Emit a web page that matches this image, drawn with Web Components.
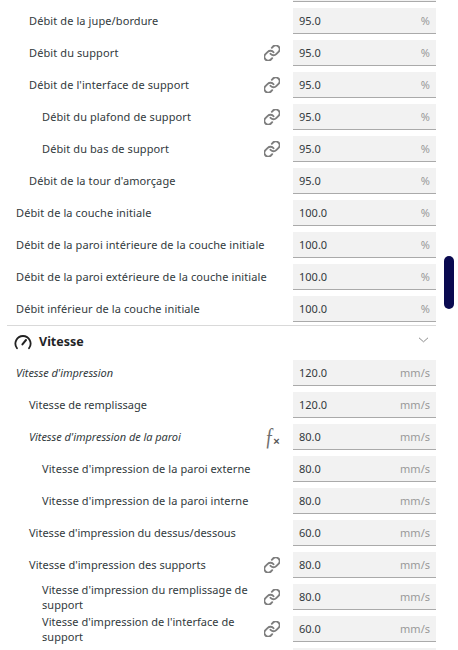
<!DOCTYPE html>
<html lang="fr">
<head>
<meta charset="utf-8">
<title>Paramètres</title>
<style>
  html, body { margin: 0; height: 100%; overflow: hidden; background: #fff; }
  body { font: 11px/15px "Noto Sans", "Open Sans", sans-serif; color: #323a3d; }
</style>
</head>
<body>
<settings-panel>
  <param-row value="" unit=""></param-row>
  <param-row level="1" value="95.0" unit="%">Débit de la jupe/bordure</param-row>
  <param-row level="1" value="95.0" unit="%" icon="link">Débit du support</param-row>
  <param-row level="1" value="95.0" unit="%" icon="link">Débit de l'interface de support</param-row>
  <param-row level="2" value="95.0" unit="%" icon="link">Débit du plafond de support</param-row>
  <param-row level="2" value="95.0" unit="%" icon="link">Débit du bas de support</param-row>
  <param-row level="1" value="95.0" unit="%">Débit de la tour d'amorçage</param-row>
  <param-row value="100.0" unit="%">Débit de la couche initiale</param-row>
  <param-row value="100.0" unit="%">Débit de la paroi intérieure de la couche initiale</param-row>
  <param-row value="100.0" unit="%">Débit de la paroi extérieure de la couche initiale</param-row>
  <param-row value="100.0" unit="%">Débit inférieur de la couche initiale</param-row>
  <section-header>Vitesse</section-header>
  <param-row italic track="-0.05" value="120.0" unit="mm/s">Vitesse d'impression</param-row>
  <param-row level="1" track="0" value="120.0" unit="mm/s">Vitesse de remplissage</param-row>
  <param-row level="1" italic track="-0.05" value="80.0" unit="mm/s" icon="fx">Vitesse d'impression de la paroi</param-row>
  <param-row level="2" track="0.08" value="80.0" unit="mm/s">Vitesse d'impression de la paroi externe</param-row>
  <param-row level="2" track="0.08" value="80.0" unit="mm/s">Vitesse d'impression de la paroi interne</param-row>
  <param-row level="1" track="0" value="60.0" unit="mm/s">Vitesse d'impression du dessus/dessous</param-row>
  <param-row level="1" track="0.03" value="80.0" unit="mm/s" icon="link">Vitesse d'impression des supports</param-row>
  <param-row level="2" track="0.05" value="80.0" unit="mm/s" icon="link">Vitesse d'impression du remplissage de support</param-row>
  <param-row level="2" track="0.03" value="60.0" unit="mm/s" icon="link">Vitesse d'impression de l'interface de support</param-row>
  <param-row value="" unit=""></param-row>
</settings-panel>
<script>
const linkIcon = /*html*/ `
  <svg width="16" height="16" viewBox="1.5 1.5 21 21" fill="none" stroke="#7d7d7d" stroke-width="2.5" stroke-linecap="round" stroke-linejoin="round">
    <path d="M10 13a5 5 0 0 0 7.54.54l3-3a5 5 0 0 0-7.07-7.07l-1.72 1.71"/>
    <path d="M14 11a5 5 0 0 0-7.54-.54l-3 3a5 5 0 0 0 7.07 7.07l1.71-1.71"/>
  </svg>`;

const fxIcon = /*html*/ `<span class="fx"><i>ƒ</i><b>×</b></span>`;

customElements.define(
  "settings-panel",
  class extends HTMLElement {
    constructor() {
      super();
      const shadow = this.attachShadow({ mode: "open" });
      shadow.innerHTML = /*html*/ `
        <style>
          :host {
            display: block;
            position: relative;
            width: 458px;
            height: 650px;
            overflow: hidden;
          }
          .list {
            display: flex;
            flex-direction: column;
            margin-top: -27px;
            padding-right: 22px;
          }
          .thumb {
            position: absolute;
            left: 444px;
            top: 256px;
            width: 10px;
            height: 53px;
            border-radius: 5px;
            background: #0a0a50;
          }
        </style>
        <div class="list"><slot></slot></div>
        <div class="thumb"></div>
      `;
    }
  }
);

customElements.define(
  "param-row",
  class extends HTMLElement {
    constructor() {
      super();
      const level = Number(this.getAttribute("level") || 0);
      const icon = this.getAttribute("icon");
      const track = this.getAttribute("track") || "0.1";
      const shadow = this.attachShadow({ mode: "open" });
      shadow.innerHTML = /*html*/ `
        <style>
          :host {
            display: grid;
            grid-template-columns: 1fr 143px;
            align-items: center;
            height: 32px;
            flex: none;
            color: #323a3d;
          }
          .label {
            grid-area: 1 / 1;
            padding-right: 23px;
            padding-bottom: 1px;
          }
          :host([italic]) .label { font-style: italic; }
          .icon {
            grid-area: 1 / 1;
            justify-self: end;
            margin-right: 13px;
            width: 16px;
            height: 16px;
            display: flex;
            align-items: center;
            justify-content: center;
          }
          .fx {
            display: flex;
            align-items: flex-end;
            color: #6e6e6e;
            height: 18px;
          }
          .fx i {
            font: italic 22px/18px "Liberation Serif", serif;
            transform: scale(.85, 1.1);
          }
          .fx b {
            font: bold 11px/9px "Liberation Sans", sans-serif;
            margin-left: -2px;
            color: #555;
          }
          .box {
            grid-area: 1 / 2;
            box-sizing: border-box;
            height: 26px;
            display: flex;
            align-items: center;
            justify-content: space-between;
            padding: 0 6px;
            background: #f2f2f2;
            border-bottom: 1px solid #aaa;
          }
          .unit { color: #999; }
        </style>
        <div class="label" style="padding-left:${16 + level * 13}px;letter-spacing:${track}px"><slot></slot></div>
        ${icon ? `<div class="icon">${icon === "fx" ? fxIcon : linkIcon}</div>` : ""}
        <div class="box">
          <span class="value">${this.getAttribute("value")}</span>
          <span class="unit">${this.getAttribute("unit")}</span>
        </div>
      `;
    }
  }
);

customElements.define(
  "section-header",
  class extends HTMLElement {
    constructor() {
      super();
      const shadow = this.attachShadow({ mode: "open" });
      shadow.innerHTML = /*html*/ `
        <style>
          :host {
            display: flex;
            align-items: center;
            box-sizing: border-box;
            height: 32px;
            flex: none;
            margin-left: 7px;
            padding: 0 6px 0 7px;
            gap: 7px;
            border-top: 1px solid #d9d9d9;
            font-size: 12.5px;
            font-weight: 700;
            color: #1f2426;
          }
          .title { flex: 1; }
          .chevron { margin: -4px 1px 0 0; }
        </style>
        <svg width="18" height="16" viewBox="0 0 18 16" fill="none" stroke="#222" stroke-width="1.8" stroke-linecap="round">
          <path d="M3 14.2A7.6 7.6 0 0 1 9 2a7.6 7.6 0 0 1 6 12.2"/>
          <path d="M8.4 10.4 12 6" stroke-width="2"/>
        </svg>
        <span class="title"><slot></slot></span>
        <svg class="chevron" width="11" height="6" viewBox="0 0 11 6" fill="none" stroke="#8c8c8c" stroke-width="1">
          <path d="M1 .8 5.5 4.8 10 .8"/>
        </svg>
      `;
    }
  }
);
</script>
</body>
</html>
